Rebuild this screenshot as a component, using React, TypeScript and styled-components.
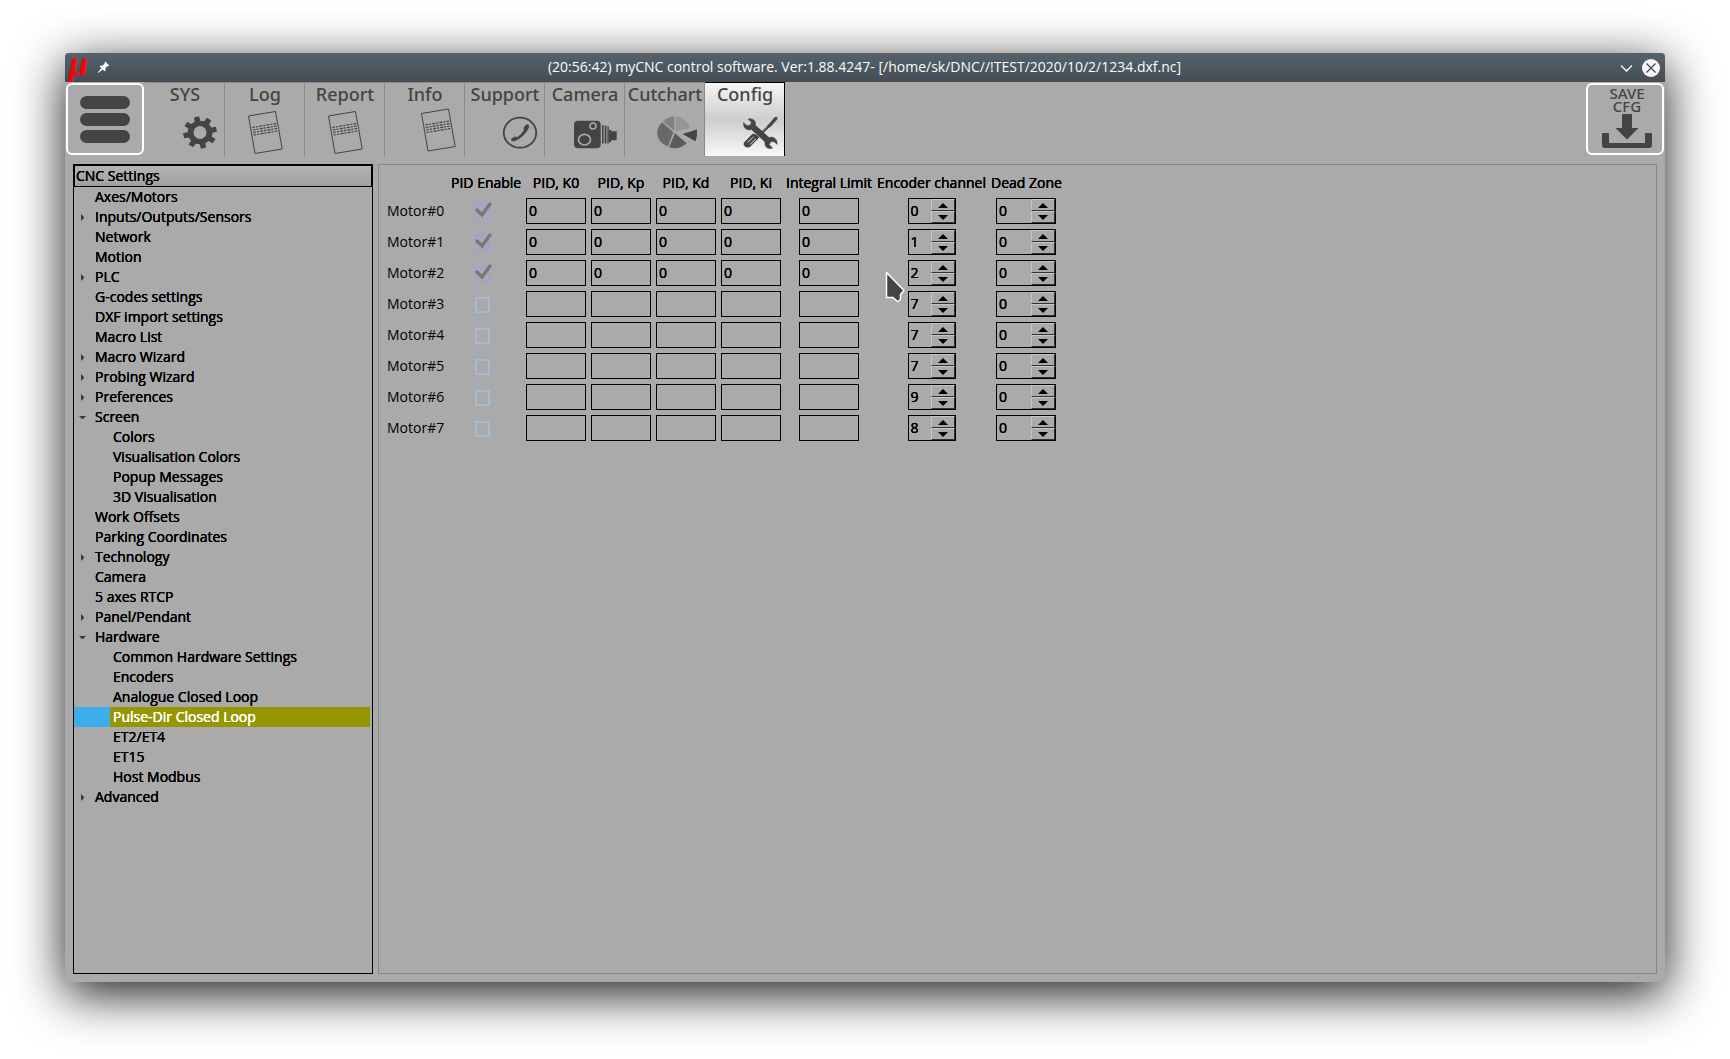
import React, { useState } from "react";
import styled, { createGlobalStyle, css } from "styled-components";

const INK = "#444444";
const FACE = "#aaaaaa";
const UI_FONT = `"Open Sans", "Noto Sans", sans-serif`;
const TITLE_FONT = `"Noto Sans", "Open Sans", sans-serif`;

const GlobalStyle = createGlobalStyle`
  *, *::before, *::after { box-sizing: border-box; }
  body { margin: 0; background: #ffffff; }
  button, input { font: inherit; color: inherit; margin: 0; }
`;

const heavy = css`
  text-shadow: 0 0 0 currentColor, 0 0 0 currentColor;
`;

/* ---------- window frame ---------- */

const Desktop = styled.div`
  display: flex;
  min-height: 100vh;
  padding: 53px 65px 77px;
  font: 14px/20px ${UI_FONT};
  color: #000000;
`;

const Window = styled.div`
  flex: 1;
  min-width: 0;
  display: flex;
  flex-direction: column;
  background: ${FACE};
  border-radius: 4px 4px 3px 3px;
  box-shadow: 0 12px 50px rgba(0, 0, 0, 0.9);
`;

const TitleBar = styled.header`
  display: grid;
  grid-template-columns: 1fr auto 1fr;
  align-items: center;
  height: 29px;
  padding: 0 5px 0 4px;
  border-radius: 4px 4px 0 0;
  background: linear-gradient(#566169, #444d55);
  color: #fcfcfc;
`;

const TitleGroup = styled.div<{ $end?: boolean }>`
  display: flex;
  align-items: center;
  gap: 8px;
  justify-content: ${(p) => (p.$end ? "flex-end" : "flex-start")};
`;

const Logo = styled.span`
  width: 20px;
  height: 29px;
  color: #ff0000;
  font: italic bold 34px/22px "Liberation Serif", serif;
`;

const Title = styled.h1`
  margin: 0;
  padding-bottom: 2px;
  font: 14px/26px ${UI_FONT};
`;

const FrameButton = styled.button`
  display: flex;
  padding: 0;
  border: 0;
  background: none;
`;

/* ---------- toolbar ---------- */

const Toolbar = styled.div`
  display: flex;
  align-items: flex-start;
  height: 74px;
  padding: 0 1px;
`;

const FramedButton = styled.button`
  flex: none;
  display: flex;
  flex-direction: column;
  align-items: center;
  width: 78px;
  height: 72px;
  margin-top: 1px;
  padding: 0;
  border: 2px solid #ffffff;
  border-radius: 6px;
  background: ${FACE};
  color: ${INK};
  font: 500 15px/13px ${TITLE_FONT};
`;

const MenuButton = styled(FramedButton)`
  justify-content: center;
  gap: 4px;
  margin-right: 1px;
`;

const MenuBar = styled.span`
  width: 50px;
  height: 13px;
  border-radius: 7px;
  background: ${INK};
`;

const SaveButton = styled(FramedButton)`
  margin-left: auto;
  padding: 2px 0 0 4px;
`;

const SaveText = styled.span`
  width: 40px;
  height: 27px;
  text-align: center;
`;

const Tabs = styled.div`
  display: flex;
`;

const Tab = styled.button<{ $active: boolean }>`
  display: flex;
  flex-direction: column;
  align-items: center;
  width: 80px;
  height: 74px;
  padding: 0 0 0 1px;
  border: solid #8a8a8a;
  border-width: 1px 1px 0 0;
  background: ${FACE};
  color: ${INK};
  font: 500 18px/23px ${TITLE_FONT};
  ${(p) =>
    p.$active &&
    css`
      border-color: #000000;
      background: linear-gradient(#f6f6f6, #cdcdcd 50%, #f8f8f8);
    `}
`;

const TabIcon = styled.svg`
  display: block;
  flex: none;
  width: 80px;
  height: 48px;
  margin-top: 2px;
`;

/* ---------- body ---------- */

const Body = styled.div`
  flex: 1;
  display: flex;
  gap: 5px;
  padding: 8px;
`;

const Tree = styled.nav`
  flex: none;
  width: 300px;
  border: 1px solid #000000;
  ${heavy}
`;

const TreeHeader = styled.div`
  height: 22px;
  padding: 0 1px;
  border: 1px solid #000000;
  background: linear-gradient(#b4b4b4, #a0a0a0);
  line-height: 20px;
`;

const TreeList = styled.ul`
  list-style: none;
  margin: 0;
  padding: 0 2px 0 0;
`;

const TreeRow = styled.button<{ $selected: boolean }>`
  display: flex;
  width: 100%;
  height: 20px;
  padding: 0;
  border: 0;
  text-align: left;
  text-shadow: inherit;
  color: ${(p) => (p.$selected ? "#ffffff" : "#000000")};
  background: ${(p) => (p.$selected ? "#3daee9" : "none")};
`;

const Branch = styled.span<{ $depth: number }>`
  flex: none;
  display: flex;
  align-items: center;
  width: ${(p) => 18 + p.$depth * 18}px;
  height: 20px;
  padding-left: 4px;
`;

const TreeLabel = styled.span<{ $selected: boolean }>`
  flex: 1;
  padding-left: 3px;
  ${heavy}
  background: ${(p) => (p.$selected ? "#969600" : "none")};
`;

const Panel = styled.main`
  position: relative;
  flex: 1;
  min-width: 0;
  padding: 3px;
  border: 1px solid #888888;
`;

const Table = styled.table`
  table-layout: fixed;
  width: 684px;
  border-spacing: 5px;
`;

const Th = styled.th`
  height: 20px;
  padding: 0;
  font-weight: 400;
  white-space: nowrap;
  ${heavy}
`;

const MotorHead = styled.th`
  padding: 0;
  font-weight: 400;
  text-align: left;
`;

const Td = styled.td`
  height: 26px;
  padding: 0;
`;

const Centered = styled.div`
  display: flex;
  justify-content: center;
`;

const Value = styled.input`
  display: block;
  width: 60px;
  height: 26px;
  padding: 0 2px 2px;
  border: 1px solid #000000;
  border-radius: 0;
  background: transparent;
  outline: none;
  ${heavy}
`;

const CheckWrap = styled.span`
  position: relative;
  display: block;
  width: 15px;
  height: 16px;
  margin: 2px 7px 0 0;
`;

const Check = styled.input`
  appearance: none;
  display: block;
  width: 15px;
  height: 16px;
  border: 2px solid #a3bbd3;
  &:checked {
    border-color: #a3a0d6;
  }
  & + svg {
    display: none;
  }
  &:checked + svg {
    display: block;
  }
`;

const CheckMark = styled.svg`
  position: absolute;
  left: -1px;
  top: -3px;
  pointer-events: none;
`;

const Spin = styled.div<{ $wide?: boolean }>`
  display: flex;
  width: ${(p) => (p.$wide ? 60 : 48)}px;
  height: 26px;
  border: 1px solid #000000;
`;

const SpinInput = styled.input`
  flex: 1;
  min-width: 0;
  width: 0;
  padding: 0 0 0 2px;
  border: 0;
  background: transparent;
  outline: none;
  appearance: textfield;
  &::-webkit-inner-spin-button {
    appearance: none;
    margin: 0;
  }
  ${heavy}
`;

const SpinButtons = styled.div`
  display: flex;
  flex-direction: column;
  width: 24px;
`;

const SpinButton = styled.button`
  flex: 1;
  display: flex;
  align-items: center;
  justify-content: center;
  padding: 0;
  border: solid;
  border-width: 1px;
  border-color: #c6c6c6 #2e2e2e #333333 #c6c6c6;
  background: ${FACE};
`;

const Pointer = styled.svg`
  position: absolute;
  left: 505px;
  top: 105px;
  pointer-events: none;
`;

/* ---------- drawings ---------- */

const gearPath = () => {
  const pts: string[] = [];
  for (let i = 0; i < 8; i++) {
    const a = -12 + i * 45;
    [
      [-13, 12.5],
      [-9, 17],
      [9, 17],
      [13, 12.5],
    ].forEach(([d, r]) => {
      const t = ((a + d) * Math.PI) / 180;
      pts.push(`${(55 + r * Math.cos(t)).toFixed(2)} ${(24.5 + r * 0.95 * Math.sin(t)).toFixed(2)}`);
    });
  }
  return `M${pts.join("L")}Z M61.5 24.5a6.5 6.5 0 1 0-13 0a6.5 6.5 0 1 0 13 0Z`;
};

const Sheet = ({ dx = 0, dy = 0 }: { dx?: number; dy?: number }) => (
  <g transform={`translate(${dx} ${dy})`} fill="none" stroke={INK}>
    <path d="M23.5 8L50.5 3.5L57.2 41L30 45.5Z" />
    {[0, 2.5, 5, 7.5].map((y) => (
      <path key={y} d={`M${27.2 + y / 6} ${19.5 + y}l24-4`} strokeWidth="1.2" strokeDasharray="3 1 2 1.2" />
    ))}
  </g>
);

const icons: Record<string, React.ReactNode> = {
  SYS: <path d={gearPath()} fill={INK} fillRule="evenodd" />,
  Log: <Sheet />,
  Report: <Sheet />,
  Info: <Sheet dx={13} dy={-2.5} />,
  Support: (
    <>
      <ellipse cx="55" cy="24.7" rx="16.2" ry="15" fill="none" stroke={INK} strokeWidth="1.8" />
      <path
        d="M46.5 30.5L50 28.6Q51.6 28.5 51.8 29.6Q56.5 26.5 59.2 21.5Q58 20.8 58.8 19.4L61 16.8Q62.5 15.8 63.6 17Q65 19 63.2 21.2Q58.5 29 50.6 32.8Q48 34 46.4 32.4Q45.6 31.2 46.5 30.5Z"
        fill={INK}
      />
    </>
  ),
  Camera: (
    <>
      <rect x="29" y="12.7" width="26.7" height="27.5" rx="4" fill={INK} />
      <ellipse cx="39.5" cy="31.7" rx="6" ry="5.3" fill="none" stroke={FACE} strokeWidth="1.7" />
      <circle cx="48" cy="18" r="3" fill="none" stroke={FACE} strokeWidth="1.5" />
      <path
        d="M57 17h1.5v18.5h-1.5zM59.6 17.5h1.8v18h-1.8zM62.4 18.5h1.4v17h-1.4zM64 22h2v12h-2zM66 23.2h5.7v9h-5.7z"
        fill={INK}
      />
    </>
  ),
  Cutchart: (
    <>
      <path d="M50.6 23.2V8.3Q60 9 65.2 19.4Z" fill="#959595" />
      <path d="M49.2 22.8V8.3Q43 8.6 38 13.4Z" fill="#818181" />
      <path d="M48.4 24.2L37 14.2Q32 19.5 32.2 25.5Q33 34.5 42.8 38.6Z" fill="#696969" />
      <path d="M50 25.2L44 39.2Q54 42.4 61.8 35.2Z" fill="#5c5c5c" />
      <path d="M57.5 26L72 21.5Q72.6 28 70.6 33.2Z" fill={INK} />
    </>
  ),
  Config: (
    <>
      <path d="M69.8 9.6L72 9.2L71.6 11.6L65.6 18.2Q64.6 18.8 64 18.2Q63.4 17.4 64 16.6Z" fill={INK} stroke={INK} />
      <path d="M64.5 17.5L54 27" stroke={INK} strokeWidth="3" />
      <path d="M62 18.5L53 27M64 20.5L55 29" stroke="#dddddd" strokeWidth="0.8" />
      <path d="M39 34.5L47.5 25.8Q52 26 54.2 29.5L45.5 38.4Q42.5 40.4 39.8 38.4Q37.6 36.4 39 34.5Z" fill={INK} />
      <path d="M42.5 34.5L48.5 28.8M45 36.5L51 30.8" stroke="#e6e6e6" strokeWidth="0.9" />
      <path
        d="M38.6 14.6Q38 20 42.2 21.6Q44.6 22.3 46.4 21.4L60 34Q59.2 38.4 63 40.2Q65.6 41 67.6 40L64.2 36.6L66.2 33.6L69.6 33.9L72 36.4Q72.6 31.2 68.4 29.4Q66.2 28.6 64 29.6L50.4 17.2Q51 12.6 47.4 11.2Q45.4 10.4 43.2 11L46.6 14.4L44.8 17.6L41.2 17.2Z"
        fill={INK}
        stroke={INK}
        strokeWidth="0.5"
      />
    </>
  ),
};

const Arrow = ({ open }: { open: boolean }) => (
  <svg width="9" height="9" viewBox="0 0 9 9" aria-hidden="true">
    <path d={open ? "M1 3h7L5 6H4Z" : "M3 1v7L6 5V4Z"} fill="#3c3c3c" />
  </svg>
);

/* ---------- data ---------- */

type Node = { label: string; depth?: number; state?: "open" | "closed" };

const nodes: Node[] = [
  { label: "Axes/Motors" },
  { label: "Inputs/Outputs/Sensors", state: "closed" },
  { label: "Network" },
  { label: "Motion" },
  { label: "PLC", state: "closed" },
  { label: "G-codes settings" },
  { label: "DXF import settings" },
  { label: "Macro List" },
  { label: "Macro Wizard", state: "closed" },
  { label: "Probing Wizard", state: "closed" },
  { label: "Preferences", state: "closed" },
  { label: "Screen", state: "open" },
  { label: "Colors", depth: 1 },
  { label: "Visualisation Colors", depth: 1 },
  { label: "Popup Messages", depth: 1 },
  { label: "3D Visualisation", depth: 1 },
  { label: "Work Offsets" },
  { label: "Parking Coordinates" },
  { label: "Technology", state: "closed" },
  { label: "Camera" },
  { label: "5 axes RTCP" },
  { label: "Panel/Pendant", state: "closed" },
  { label: "Hardware", state: "open" },
  { label: "Common Hardware Settings", depth: 1 },
  { label: "Encoders", depth: 1 },
  { label: "Analogue Closed Loop", depth: 1 },
  { label: "Pulse-Dir Closed Loop", depth: 1 },
  { label: "ET2/ET4", depth: 1 },
  { label: "ET15", depth: 1 },
  { label: "Host Modbus", depth: 1 },
  { label: "Advanced", state: "closed" },
];

const tabNames = ["SYS", "Log", "Report", "Info", "Support", "Camera", "Cutchart", "Config"];
const columns = ["PID Enable", "PID, K0", "PID, Kp", "PID, Kd", "PID, Ki", "Integral Limit", "Encoder channel", "Dead Zone"];
const columnWidths = [59, 70, 60, 60, 60, 60, 86, 109, 70];
const channels = [0, 1, 2, 7, 7, 7, 9, 8];

const Spinner = ({ start, label, wide }: { start: number; label: string; wide?: boolean }) => {
  const [value, setValue] = useState(start);
  return (
    <Spin $wide={wide}>
      <SpinInput type="number" aria-label={label} value={value} onChange={(e) => setValue(Number(e.target.value))} />
      <SpinButtons>
        <SpinButton type="button" aria-label={`${label} up`} onClick={() => setValue(value + 1)}>
          <svg width="10" height="5" viewBox="0 0 10 5">
            <path d="M0 5L5 0L10 5Z" />
          </svg>
        </SpinButton>
        <SpinButton type="button" aria-label={`${label} down`} onClick={() => setValue(value - 1)}>
          <svg width="10" height="5" viewBox="0 0 10 5">
            <path d="M0 0L5 5L10 0Z" />
          </svg>
        </SpinButton>
      </SpinButtons>
    </Spin>
  );
};

const MotorRow = ({ index, channel }: { index: number; channel: number }) => {
  const enabled = index < 3;
  const name = `Motor#${index}`;
  const id = `motor-${index}`;
  return (
    <tr>
      <MotorHead scope="row">
        <label htmlFor={id}>{name}</label>
      </MotorHead>
      <Td>
        <Centered>
          <CheckWrap>
            <Check type="checkbox" id={id} defaultChecked={enabled} />
            <CheckMark width="19" height="18" viewBox="0 0 19 18" aria-hidden="true">
              <path d="M3 9L8 14L16 3" fill="none" stroke="#787878" strokeWidth="3.4" strokeLinecap="round" />
            </CheckMark>
          </CheckWrap>
        </Centered>
      </Td>
      {columns.slice(1, 6).map((c) => (
        <Td key={c}>
          <Centered>
            <Value type="text" aria-label={`${name} ${c}`} defaultValue={enabled ? "0" : ""} />
          </Centered>
        </Td>
      ))}
      <Td>
        <Centered>
          <Spinner start={channel} label={`${name} Encoder channel`} />
        </Centered>
      </Td>
      <Td>
        <Centered>
          <Spinner start={0} label={`${name} Dead Zone`} wide />
        </Centered>
      </Td>
    </tr>
  );
};

export default function App() {
  const [tab, setTab] = useState("Config");
  const [selected, setSelected] = useState("Pulse-Dir Closed Loop");

  return (
    <>
      <GlobalStyle />
      <Desktop>
        <Window>
          <TitleBar>
            <TitleGroup>
              <Logo>μ</Logo>
              <FrameButton type="button" aria-label="Keep above">
                <svg width="13" height="13" viewBox="0 0 13 13">
                  <path
                    d="M8.2 0.6L12.2 4.4L11.2 5.4L10.4 5L8.4 7.2Q9 9 7.8 10.4L5.8 8.4L1.2 12L0.8 11.6L4.4 7L2.6 5.2Q4 4 5.6 4.6L7.8 2.6L7.4 1.6Z"
                    fill="#fcfcfc"
                  />
                </svg>
              </FrameButton>
            </TitleGroup>
            <Title>(20:56:42) myCNC control software. Ver:1.88.4247- [/home/sk/DNC//!TEST/2020/10/2/1234.dxf.nc]</Title>
            <TitleGroup $end>
              <FrameButton type="button" aria-label="Minimize">
                <svg width="18" height="18" viewBox="0 0 18 18">
                  <path d="M5 6.500L10.500 12L16 6.500" fill="none" stroke="#fcfcfc" strokeWidth="1.3" />
                </svg>
              </FrameButton>
              <FrameButton type="button" aria-label="Close">
                <svg width="18" height="18" viewBox="0 0 18 18">
                  <circle cx="9" cy="9" r="9" fill="#f4f5f6" />
                  <path d="M4.5 4.5l9 9M13.5 4.5l-9 9" stroke="#3f474e" strokeWidth="1.2" />
                </svg>
              </FrameButton>
            </TitleGroup>
          </TitleBar>

          <Toolbar>
            <MenuButton type="button" aria-label="Menu">
              <MenuBar />
              <MenuBar />
              <MenuBar />
            </MenuButton>
            <Tabs>
              {tabNames.map((t) => (
                <Tab key={t} type="button" $active={t === tab} onClick={() => setTab(t)}>
                  {t}
                  <TabIcon viewBox="0 0 80 48" aria-hidden="true">
                    {icons[t]}
                  </TabIcon>
                </Tab>
              ))}
            </Tabs>
            <SaveButton type="button">
              <SaveText>SAVE CFG</SaveText>
              <svg width="50" height="34" viewBox="0 0 50 34" aria-hidden="true">
                <path d="M20 0h10v14h6.5L25 25.5L13.5 14H20Z" fill={INK} />
                <path d="M0 19h7v10h36V19h7v12q0 3-3 3H3q-3 0-3-3Z" fill={INK} />
              </svg>
            </SaveButton>
          </Toolbar>

          <Body>
            <Tree aria-label="CNC Settings">
              <TreeHeader>CNC Settings</TreeHeader>
              <TreeList>
                {nodes.map(({ label, depth = 0, state }) => {
                  const on = label === selected;
                  return (
                    <li key={label}>
                      <TreeRow type="button" $selected={on} onClick={() => setSelected(label)}>
                        <Branch $depth={depth}>{state && <Arrow open={state === "open"} />}</Branch>
                        <TreeLabel $selected={on}>{label}</TreeLabel>
                      </TreeRow>
                    </li>
                  );
                })}
              </TreeList>
            </Tree>

            <Panel>
              <Table>
                <colgroup>
                  {columnWidths.map((w, i) => (
                    <col key={i} width={w} />
                  ))}
                </colgroup>
                <thead>
                  <tr>
                    <td />
                    {columns.map((c) => (
                      <Th key={c} scope="col">
                        {c}
                      </Th>
                    ))}
                  </tr>
                </thead>
                <tbody>
                  {channels.map((c, i) => (
                    <MotorRow key={i} index={i} channel={c} />
                  ))}
                </tbody>
              </Table>
              <Pointer width="24" height="36" viewBox="0 0 24 36" aria-hidden="true">
                <path
                  d="M2.5 2.5L20 20.5L16.5 24.5V29.5L13.5 31.5L9 27.5H2.5Z"
                  fill="#444444"
                  stroke="#ffffff"
                  strokeWidth="1.5"
                  strokeLinejoin="round"
                />
              </Pointer>
            </Panel>
          </Body>
        </Window>
      </Desktop>
    </>
  );
}
